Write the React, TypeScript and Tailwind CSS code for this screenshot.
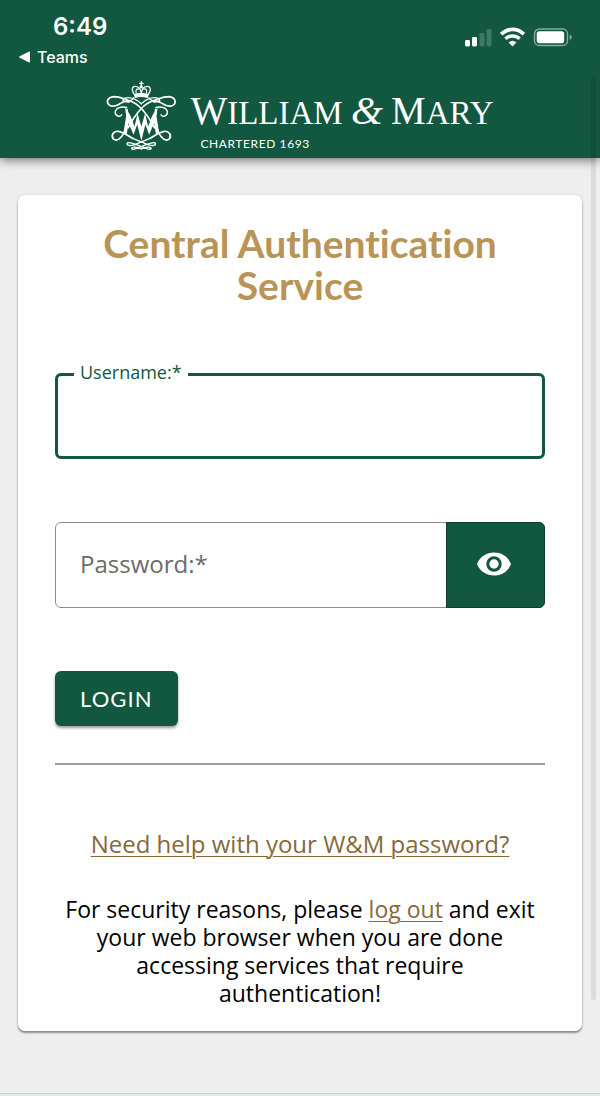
import React, { useState } from "react";

function StatusBar() {
  return (
    <div className="flex items-start justify-between pl-[19px] pr-[28px] pt-[12px] font-['Inter']">
      <div>
        <div className="pl-[34px] text-[24px] leading-[30px] font-semibold">6:49</div>
        <a href="#teams" className="flex items-center gap-[7px] text-[16px] leading-[30px] font-medium">
          <svg width="11" height="12" viewBox="0 0 11 12" fill="currentColor" aria-hidden="true">
            <path d="M0.6 5.2 9.6 0.7Q11 0.3 11 1.6V10.4Q11 11.7 9.6 11.3L0.6 6.8Q-0.2 6 0.6 5.2Z" />
          </svg>
          Teams
        </a>
      </div>
      <div className="flex items-center gap-[8px] pt-[15px]">
        <svg width="27" height="20" viewBox="0 0 27 20" fill="currentColor" aria-hidden="true">
          <rect x="0" y="13" width="5" height="6.5" rx="1.4" />
          <rect x="7" y="10" width="5" height="9.5" rx="1.4" />
          <rect x="14.5" y="6" width="5" height="13.5" rx="1.4" opacity=".2" />
          <rect x="21.5" y="2" width="5" height="17.5" rx="1.4" opacity=".2" />
        </svg>
        <svg width="25" height="20" viewBox="0 0 25 20" fill="none" stroke="currentColor" aria-hidden="true">
          <path d="M1.2 7.2C7.6 .8 17.4 .8 23.8 7.2" strokeWidth="3.6" />
          <path d="M5.4 11.8C9.5 8 15.5 8 19.6 11.8" strokeWidth="3.4" />
          <path d="M8.6 15.4Q12.5 12 16.4 15.4L12.5 19.5Z" fill="currentColor" stroke="none" />
        </svg>
        <svg width="39" height="20" viewBox="0 0 39 20" fill="none" aria-hidden="true">
          <rect x="1.5" y="2" width="33" height="16.5" rx="4.8" stroke="currentColor" strokeWidth="1.4" opacity=".5" />
          <rect x="3.7" y="4.2" width="27.5" height="12" rx="2.6" fill="currentColor" />
          <path d="M36.7 7.4Q38.8 8.4 38.8 10.2T36.7 13Z" fill="currentColor" opacity=".5" />
        </svg>
      </div>
    </div>
  );
}

function Crest() {
  return (
    <svg
      width="72"
      height="72"
      viewBox="47 31 212 212"
      fill="none"
      stroke="currentColor"
      strokeLinecap="round"
      strokeLinejoin="round"
      strokeWidth="5"
      aria-hidden="true"
    >
      <g strokeWidth="3.5">
        <path d="M151 36V48M146 41H156" strokeWidth="4" />
        <circle cx="151" cy="51" r="3" fill="currentColor" />
        <path d="M131 74C120 60 124 49 134 50C144 51 150 56 151 72C152 56 158 51 168 50C178 49 182 60 171 74" />
        <path d="M136 70C133 61 138 55 144 58M166 70C169 61 164 55 158 58" />
        <path d="M131 74Q151 68 171 74L169 82Q151 77 133 82Z" fill="currentColor" />
      </g>
      <path d="M190 172C172 138 146 100 116 92C92 84 88 80 70 80C50 82 47 97 57 105C67 112 80 106 91 99C98 94 106 92 114 96" />
      <path d="M112 172C130 138 156 100 186 92C210 84 214 80 232 80C252 82 255 97 245 105C235 112 222 106 211 99C204 94 196 92 188 96" />
      <g strokeWidth="4">
        <path d="M151 101C140 91 128 83 112 83C98 83 92 91 101 94C112 96 126 90 128 84" />
        <path d="M151 101C162 91 174 83 190 83C204 83 210 91 201 94C190 96 176 90 174 84" />
        <path d="M108 112C92 108 76 113 74 125C74 138 90 142 93 133" />
        <path d="M194 112C210 108 226 113 228 125C228 138 212 142 209 133" />
      </g>
      <path d="M109 118C112 150 109 170 99 188C91 203 80 213 69 205C60 195 69 181 83 182C99 184 112 196 126 203" />
      <path d="M193 118C190 150 193 170 203 188C211 203 222 213 233 205C242 195 233 181 219 182C203 184 190 196 176 203" />
      <g fill="currentColor" stroke="none">
        <path d="M103 112Q112 124 119 136L131 168L140 130L151 168L162 130L171 168L183 136Q190 124 199 112L195 142L174 192L163 162L151 210L139 162L128 192L107 142Z" />
        <path d="M106 140 115 150 108 190 98 190Z" />
        <path d="M196 140 187 150 194 190 204 190Z" />
      </g>
      <g strokeWidth="4">
        <path d="M126 203C146 211 160 218 172 222C186 226 194 223 193 218C191 212 172 218 151 227C134 234 122 238 122 232C124 226 140 229 151 234" />
        <path d="M176 203C156 211 142 218 130 222C116 226 108 223 109 218C111 212 130 218 151 227C168 234 180 238 180 232C178 226 162 229 151 234" />
      </g>
    </svg>
  );
}

function Brand() {
  return (
    <div className="flex justify-center gap-[12px] pt-[8px]">
      <Crest />
      <div className="pt-[6px]">
        <div className="font-['Liberation_Serif'] text-[33px] leading-[48px] whitespace-nowrap">
          <span className="text-[39px]">W</span>ILLIAM <span className="text-[41px] italic">&amp;</span>{" "}
          <span className="text-[39px]">M</span>ARY
        </div>
        <div className="pl-[10px] font-['Lato'] text-[12px] leading-[14px] tracking-wider">CHARTERED 1693</div>
      </div>
    </div>
  );
}

function EyeIcon() {
  return (
    <svg width="34" height="24" viewBox="0 0 34 24" aria-hidden="true">
      <path d="M0 12C3 4.5 9.5 .5 17 .5S31 4.5 34 12C31 19.5 24.5 23.5 17 23.5S3 19.5 0 12Z" fill="currentColor" />
      <circle cx="17" cy="12" r="6.2" fill="none" stroke="#12573f" strokeWidth="3" />
    </svg>
  );
}

export default function App() {
  const [visible, setVisible] = useState(false);
  const [password, setPassword] = useState("");
  return (
    <div className="relative flex min-h-screen flex-col bg-[#eeeeee] font-['Open_Sans',sans-serif] text-black">
      <header className="bg-[#12573f] pb-[6px] text-white shadow-[0_2px_10px_rgba(0,0,0,0.55)]">
        <StatusBar />
        <Brand />
      </header>

      <main className="mx-[18px] mt-[37px] rounded-[7px] bg-white px-[37px] pt-[27px] pb-[24px] shadow-[0_2px_2px_rgba(0,0,0,0.4),0_0_3px_rgba(0,0,0,0.12)]">
        <h1 className="text-center font-['Lato'] text-[39px] leading-[42px] font-bold text-[#b99457] [font-variant-ligatures:none]">
          Central Authentication Service
        </h1>

        <form onSubmit={(e) => e.preventDefault()}>
          <fieldset className="mt-[54px] min-w-0 rounded-[6px] border-[3px] border-[#12573f] pb-[4px]">
            <legend className="ml-[16px] px-[6px] pb-[4px] text-[18px] leading-[24px] text-[#12573f]">
              <label htmlFor="username">Username:*</label>
            </legend>
            <input
              id="username"
              type="text"
              className="block h-[64px] w-full bg-transparent px-[22px] text-[24px] outline-none"
            />
          </fieldset>

          <div className="relative mt-[63px] flex h-[86px] rounded-[6px] border border-[#8c8c8c]">
            {password === "" && (
              <label
                htmlFor="password"
                className="pointer-events-none absolute inset-y-0 left-[24px] flex items-center pb-[2px] text-[24px] text-[#6b6b6b]"
              >
                Password:*
              </label>
            )}
            <input
              id="password"
              type={visible ? "text" : "password"}
              value={password}
              onChange={(e) => setPassword(e.target.value)}
              className="min-w-0 flex-1 bg-transparent px-[24px] text-[24px] outline-none"
            />
            <button
              type="button"
              aria-label="Toggle password"
              onClick={() => setVisible(!visible)}
              className="-m-px flex w-[99px] items-center justify-center rounded-r-[6px] border border-[#0b3d2c] bg-[#12573f] pr-[4px] pb-[2px] text-white"
            >
              <EyeIcon />
            </button>
          </div>

          <button
            type="submit"
            className="mt-[63px] block h-[55px] rounded-[6px] bg-[#12573f] px-[25px] font-['Lato'] text-[22px] tracking-wider text-white shadow-[0_2px_3px_rgba(0,0,0,0.4)]"
          >
            LOGIN
          </button>
        </form>

        <hr className="mt-[37px] border-t-2 border-[#9b9f9d]" />

        <p className="mt-[65px] text-center text-[24px] leading-[28px]">
          <a href="#help" className="text-[#86693b] underline decoration-1 underline-offset-3">
            Need help with your W&amp;M password?
          </a>
        </p>
        <p className="mt-[37px] text-center text-[23px] leading-[28px]">
          For security reasons, please{" "}
          <a href="#logout" className="text-[#86693b] underline decoration-1 underline-offset-3">
            log out
          </a>{" "}
          and exit your web browser when you are done accessing services that require authentication!
        </p>
      </main>

      <div className="mt-auto h-[3px] border-t border-[#c9cfcc] bg-[#dfe9e5]" />
      <div className="absolute top-[78px] right-[4px] bottom-[96px] w-[5px] rounded-full bg-black/8" />
    </div>
  );
}
